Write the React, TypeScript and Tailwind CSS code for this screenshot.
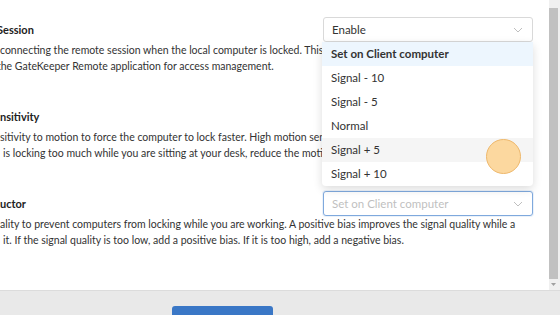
import React from "react";

function Chevron() {
  return (
    <svg width="10" height="6" viewBox="0 0 10 6" className="text-[#bfbfbf]">
      <path d="M1 1 L5 5 L9 1" fill="none" stroke="currentColor" strokeWidth="1" />
    </svg>
  );
}

function Select({ value, placeholder, focused }: { value: string; placeholder?: boolean; focused?: boolean }) {
  return (
    <div
      className={
        "flex h-[25px] w-[210px] items-center justify-between rounded-[3px] border bg-white pl-[8px] pr-[9px] " +
        (focused ? "border-[#7fa9dd] shadow-[0_0_0_1px_rgba(120,165,220,0.15)]" : "border-[#d9d9d9]")
      }
    >
      <span className={"text-[11.5px] " + (placeholder ? "text-[#bfbfbf]" : "text-[#333]")}>{value}</span>
      <Chevron />
    </div>
  );
}

const items = ["Set on Client computer", "Signal - 10", "Signal - 5", "Normal", "Signal + 5", "Signal + 10"];

export default function App() {
  return (
    <div
      className="relative h-[315px] w-[560px] overflow-hidden bg-white text-[#333]"
      style={{ fontFamily: 'Lato, "Noto Sans", sans-serif' }}
    >
      <div className="flex h-[290px]">
        <div className="relative flex flex-1 flex-col gap-[30px] overflow-hidden pt-[17px] text-[10.5px] leading-[16px]">
          {/* Section 1 */}
          <div>
            <div className="flex h-[25px] items-center justify-between pr-[16px]">
              <span className="-ml-[3px] text-[11px] font-bold text-[#222]">Session</span>
              <Select value="Enable" />
            </div>
            <div className="whitespace-nowrap">
              <div>connecting the remote session when the local computer is locked. This setting is useful</div>
              <div className="-ml-[3px]">the GateKeeper Remote application for access management.</div>
            </div>
          </div>
          {/* Section 2 */}
          <div>
            <div className="flex h-[25px] items-center justify-between pr-[16px]">
              <span className="text-[11px] font-bold text-[#222]">nsitivity</span>
              <Select value="Normal" />
            </div>
            <div className="whitespace-nowrap">
              <div>sitivity to motion to force the computer to lock faster. High motion sensitivity</div>
              <div className="pl-[3px]">is locking too much while you are sitting at your desk, reduce the motion sensitivity.</div>
            </div>
          </div>
          {/* Section 3 */}
          <div>
            <div className="flex h-[25px] items-center justify-between pr-[16px]">
              <span className="text-[11px] font-bold text-[#222]">uctor</span>
              <Select value="Set on Client computer" placeholder focused />
            </div>
            <div className="whitespace-nowrap">
              <div>ality to prevent computers from locking while you are working. A positive bias improves the signal quality while a</div>
              <div className="pl-[3px]">it. If the signal quality is too low, add a positive bias. If it is too high, add a negative bias.</div>
            </div>
          </div>

          {/* Dropdown menu overlay */}
          <div className="absolute left-[322px] top-[42px] w-[211px] rounded-[4px] bg-white shadow-[0_3px_10px_rgba(0,0,0,0.14)]">
            {items.map((it, i) => (
              <div
                key={it}
                className={
                  "flex h-[24px] items-center pl-[9px] text-[11.5px] text-[#333] " +
                  (i === 0 ? "bg-[#edf6fe] font-bold" : i === 4 ? "bg-[#f5f5f5]" : "")
                }
              >
                {it}
              </div>
            ))}
          </div>

          {/* cursor highlight */}
          <div className="absolute left-[486px] top-[139px] h-[35px] w-[35px] rounded-full border border-[#eeb86c] bg-[#fcd89f]" />
        </div>
        {/* Scrollbar */}
        <div className="flex w-[11px] flex-col bg-[#f0f0f0]">
          <div className="h-[8px]" />
          <div className="h-[271px] w-[9px] bg-[#c1c1c1]" />
          <div className="flex flex-1 items-center justify-center pr-[2px]">
            <svg width="5" height="3" viewBox="0 0 5 3">
              <path d="M0 0 L5 0 L2.5 3 Z" fill="#a0a0a0" />
            </svg>
          </div>
        </div>
      </div>
      {/* Footer */}
      <div className="flex h-[25px] border-t border-[#dcdcdc] bg-[#e9e9e9] pl-[172px] pt-[15px]">
        <div className="h-[20px] w-[101px] rounded-t-[3px] bg-[#3a77c6]" />
      </div>
    </div>
  );
}
